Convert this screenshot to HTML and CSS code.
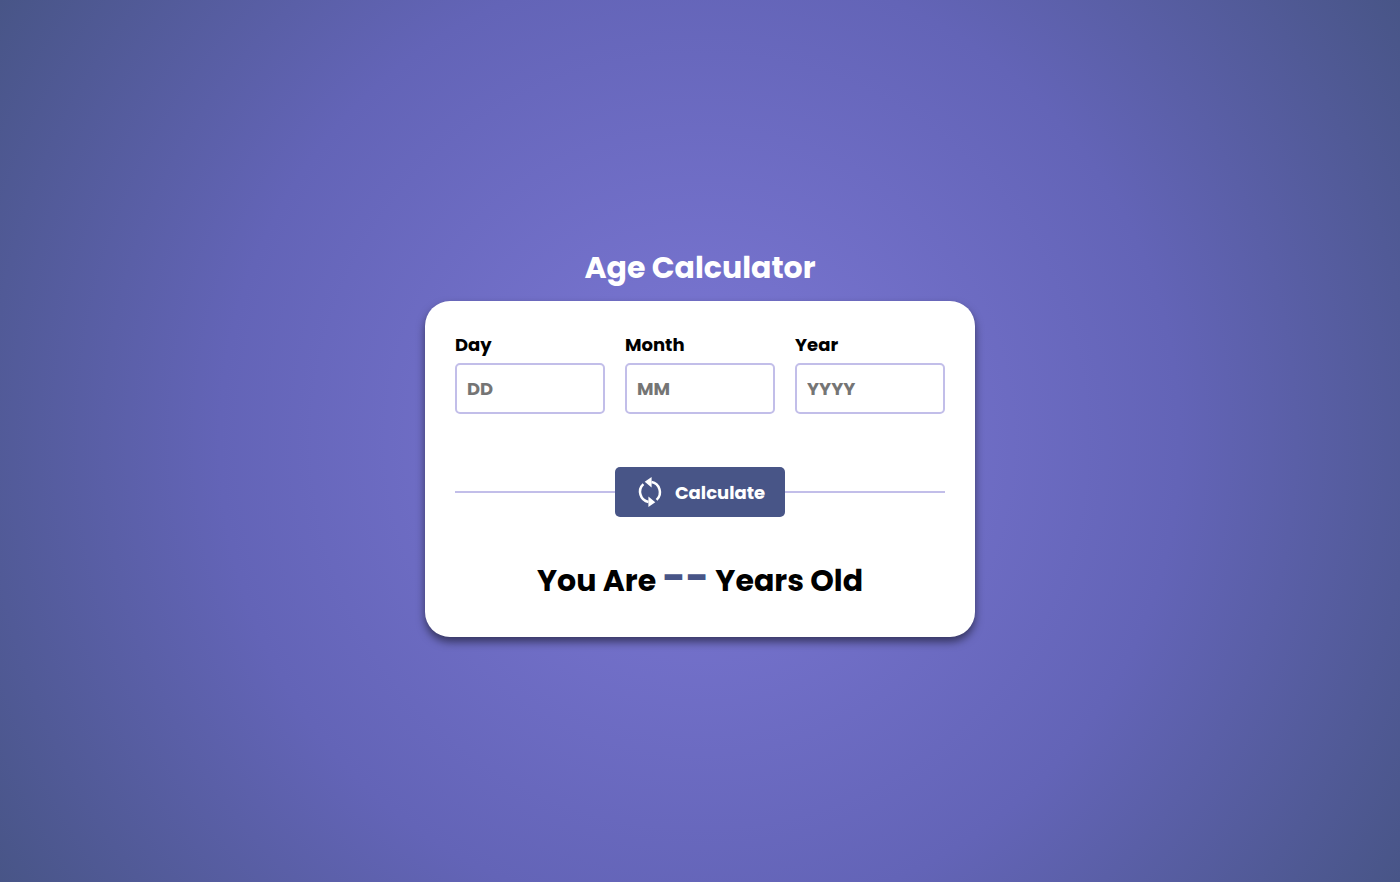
FILE: index.html
```html
<!DOCTYPE html>
<html lang="en">
<head>
  <meta charset="utf-8">
  <meta name="viewport" content="width=device-width, initial-scale=1">
  <title>Age Calculator</title>
  <link rel="stylesheet" href="styles.css">
</head>
<body>
  <main class="calculator">
    <h1 class="title">Age Calculator</h1>
    <form class="card">
      <div class="fields">
        <div class="field">
          <label class="label" for="day">Day</label>
          <input class="input" id="day" type="text" inputmode="numeric" placeholder="DD">
        </div>
        <div class="field">
          <label class="label" for="month">Month</label>
          <input class="input" id="month" type="text" inputmode="numeric" placeholder="MM">
        </div>
        <div class="field">
          <label class="label" for="year">Year</label>
          <input class="input" id="year" type="text" inputmode="numeric" placeholder="YYYY">
        </div>
      </div>
      <div class="action">
        <button class="button" type="button">
          <svg class="icon" viewBox="0 0 30 30" aria-hidden="true">
            <path d="M8.4 7.2A10.3 10.3 0 0 0 13.5 24.9M21.6 22.8A10.3 10.3 0 0 0 16.5 5.1" fill="none" stroke="currentColor" stroke-width="2.5"/>
            <path d="M9.7 4.8 16.6 0V10.4ZM20.3 25.2 13.4 19.6V30Z" fill="currentColor"/>
          </svg>
          Calculate
        </button>
      </div>
      <p class="result">You Are <span class="age">--</span> Years Old</p>
    </form>
  </main>
</body>
</html>
```
FILE: styles.css
```css
* {
  box-sizing: border-box;
  margin: 0;
}

body {
  display: flex;
  align-items: center;
  justify-content: center;
  min-height: 100vh;
  background: radial-gradient(circle, #7d78d6, #6364b7 58%, #485587);
  font-family: Poppins, Inter, sans-serif;
  font-weight: 700;
  color: #000;
}

.calculator {
  width: 100%;
  max-width: 550px;
}

.title {
  margin-bottom: 11px;
  font-size: 30px;
  line-height: 45px;
  text-align: center;
  color: #fff;
}

.card {
  padding: 30px;
  border-radius: 25px;
  background: #fff;
  box-shadow: 0 5px 8px rgba(0, 0, 0, 0.5);
}

.fields {
  display: grid;
  grid-template-columns: repeat(3, 1fr);
  gap: 20px;
}

.label {
  display: block;
  margin-bottom: 5px;
  font-size: 18px;
  line-height: 27px;
}

.input {
  display: block;
  width: 100%;
  height: 51px;
  padding: 0 10px;
  border: 2px solid #c2bee9;
  border-radius: 5px;
  background: #fff;
  font: inherit;
  font-size: 18px;
}

.input::placeholder {
  color: #757575;
}

.action {
  display: flex;
  align-items: center;
  margin: 53px 0 38px;
}

.action::before,
.action::after {
  content: "";
  flex: 1;
  height: 2px;
  background: #c2bee9;
}

.button {
  display: flex;
  align-items: center;
  gap: 10px;
  height: 50px;
  padding: 0 20px;
  border: 0;
  border-radius: 5px;
  background: #485587;
  font: inherit;
  font-size: 18px;
  color: #fff;
}

.icon {
  width: 30px;
  height: 30px;
}

.result {
  font-size: 30px;
  line-height: 52px;
  text-align: center;
}

.age {
  font-size: 40px;
  line-height: 1;
  color: #485587;
}
```
